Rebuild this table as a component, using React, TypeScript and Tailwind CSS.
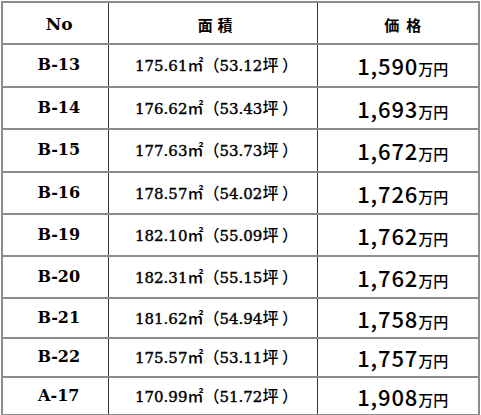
const rows = [
  { no: "B-13", m2: "175.61", tsubo: "53.12", price: "1,590", h: "h-[43px]" },
  { no: "B-14", m2: "176.62", tsubo: "53.43", price: "1,693", h: "h-[42px]" },
  { no: "B-15", m2: "177.63", tsubo: "53.73", price: "1,672", h: "h-[43px]" },
  { no: "B-16", m2: "178.57", tsubo: "54.02", price: "1,726", h: "h-[42px]" },
  { no: "B-19", m2: "182.10", tsubo: "55.09", price: "1,762", h: "h-[42px]" },
  { no: "B-20", m2: "182.31", tsubo: "55.15", price: "1,762", h: "h-[42px]" },
  { no: "B-21", m2: "181.62", tsubo: "54.94", price: "1,758", h: "h-[40px]" },
  { no: "B-22", m2: "175.57", tsubo: "53.11", price: "1,757", h: "h-[39px]" },
  { no: "A-17", m2: "170.99", tsubo: "51.72", price: "1,908", h: "h-[38px]" },
];

const serif = "font-['DejaVu_Serif','Noto_Sans_CJK_JP',serif]";
const sans = "font-['Noto_Sans_CJK_JP',sans-serif]";

export default function App() {
  return (
    <div className="w-[481px] h-[415px] bg-white pt-[1px] pl-[1px]">
      <table className="border-collapse w-[477px] text-black table-fixed">
        <colgroup>
          <col className="w-[106px]" />
          <col className="w-[209px]" />
          <col className="w-[162px]" />
        </colgroup>
        <thead>
          <tr className="h-[42px]">
            <th className={`border-2 border-[#8c8c8c] border-r border-r-[#333] text-[17px] font-bold pl-[8px] pt-[3px] ${serif}`}>
              No
            </th>
            <th className={`border-y-2 border-[#8c8c8c] border-x border-x-[#333] text-[15px] font-bold tracking-[0.05em] pl-[6px] pt-[4px] ${sans}`}>
              面 積
            </th>
            <th className={`border-2 border-[#8c8c8c] border-l border-l-[#333] text-[15px] font-bold tracking-[0.12em] pl-[12px] pt-[4px] ${sans}`}>
              価 格
            </th>
          </tr>
        </thead>
        <tbody>
          {rows.map((r) => (
            <tr key={r.no} className={r.h}>
              <td className={`border-2 border-[#8c8c8c] border-r border-r-[#333] text-center text-[16px] font-bold pl-[7px] pb-[1px] ${serif}`}>
                {r.no}
              </td>
              <td className={`border-y-2 border-[#8c8c8c] border-x border-x-[#333] text-center pl-[8px] pb-[1px] ${serif}`}>
                <span className="text-[15px] [-webkit-text-stroke:0.4px_black]">{r.m2}</span>
                <span className={`text-[16px] font-medium ${sans}`}>㎡（</span>
                <span className="text-[15px] [-webkit-text-stroke:0.4px_black]">{r.tsubo}</span>
                <span className={`text-[16px] font-medium ${sans}`}>坪 ）</span>
              </td>
              <td className={`border-2 border-[#8c8c8c] border-l border-l-[#333] text-center pl-[10px] ${sans}`}>
                <span className="text-[22px] font-medium tracking-[0.04em]">{r.price}</span>
                <span className="text-[15px] font-medium">万円</span>
              </td>
            </tr>
          ))}
        </tbody>
      </table>
    </div>
  );
}
